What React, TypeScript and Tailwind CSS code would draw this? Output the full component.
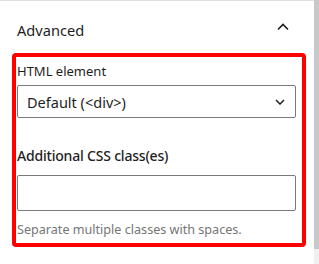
import React from "react";

export default function App() {
  const font = { fontFamily: '"Noto Sans", "Open Sans", sans-serif' };
  return (
    <div className="flex w-[319px] h-[264px] bg-white overflow-hidden" style={font}>
      <div className="w-[314px] h-full flex flex-col border-t border-[#e0e0e0]">
        <div className="h-[52px] pt-[5px] pl-[17px] pr-[25px] flex items-center justify-between">
          <span className="text-[14.6px] leading-[20px] text-[#1e1e1e]">Advanced</span>
          <svg width="12" height="8" viewBox="0 0 12 8" className="-mt-[5px]">
            <path d="M1 6.5 L6 1.5 L11 6.5" fill="none" stroke="#1e1e1e" strokeWidth="1.6" />
          </svg>
        </div>
        <div className="ml-[12px] w-[294px] h-[194px] border-[4px] border-[#ff0000] rounded-[4px] pl-[1px] pr-[6px] pt-[5px] flex flex-col">
          <div className="text-[13px] leading-[18px] text-[#1e1e1e]">HTML element</div>
          <div className="mt-[5px] h-[33px] border border-[#7a7a7a] rounded-[2px] flex items-center justify-between pl-[9px] pr-[10px]">
            <span className="text-[14.5px] leading-[20px] text-[#1e1e1e]">Default (&lt;div&gt;)</span>
            <svg width="10" height="6" viewBox="0 0 10 6">
              <path d="M1 1 L5 5 L9 1" fill="none" stroke="#1e1e1e" strokeWidth="1.5" />
            </svg>
          </div>
          <div className="mt-[28px] text-[14px] leading-[20px] font-medium tracking-[-0.2px] text-[#1e1e1e]">Additional CSS class(es)</div>
          <div className="mt-[9px] h-[36px] border border-[#7a7a7a] rounded-[2px]" />
          <div className="mt-[10px] text-[12.6px] leading-[18px] text-[#757575]">Separate multiple classes with spaces.</div>
        </div>
      </div>
      <div className="w-[5px] h-full bg-[#f0f0f0] flex flex-col">
        <div className="h-[249px] bg-[#c8c8c8]" />
      </div>
    </div>
  );
}
